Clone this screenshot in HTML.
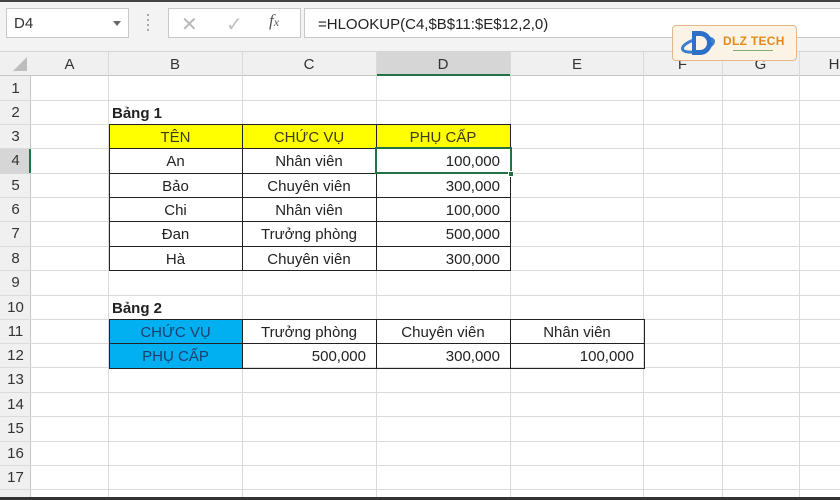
<!DOCTYPE html>
<html><head><meta charset="utf-8"><style>
*{margin:0;padding:0;box-sizing:border-box}
body{width:840px;height:500px;overflow:hidden;background:#fff;font-family:"Liberation Sans",Arial,sans-serif;position:relative}
.a{position:absolute}
.tb{left:0;top:0;width:840px;height:52px;background:#f3f3f3;border-bottom:1px solid #d4d4d4}
.box{background:#fff;border:1px solid #c8c8c8}
.hl{position:absolute;left:0;width:840px;height:1px;background:#dadada}
.vl{position:absolute;top:52px;width:1px;height:446px;background:#dadada}
.ch{position:absolute;top:52px;height:24px;line-height:26px;text-align:center;font-size:15px;color:#333}
.rh{position:absolute;left:0;width:31px;text-align:center;font-size:15px;color:#333;height:24px;line-height:26px}
.c{position:absolute;height:24px;line-height:27px;font-size:15px;color:#222;white-space:nowrap}
.ctr{text-align:center}.rt{text-align:right;padding-right:10px}
</style></head><body>
<div class="a tb"></div>
<div class="a box" style="left:6px;top:8px;width:123px;height:30px"></div>
<div class="a" style="left:14px;top:15px;font-size:15px;color:#333">D4</div>
<div class="a" style="left:113px;top:21px;width:0;height:0;border-left:4px solid transparent;border-right:4px solid transparent;border-top:5px solid #666"></div>
<div class="a" style="left:147px;top:14px;width:2px;height:2px;background:#aaa;box-shadow:0 5px 0 #aaa,0 10px 0 #aaa,0 15px 0 #aaa"></div>
<div class="a box" style="left:168px;top:8px;width:133px;height:30px"></div>
<div class="a" style="left:181px;top:12px;font-size:20px;color:#b8b8b8">✕</div>
<div class="a" style="left:226px;top:12px;font-size:20px;color:#c0c0c0">✓</div>
<div class="a" style="left:269px;top:11px;font-size:17px;font-style:italic;font-family:'Liberation Serif',serif;color:#555">f<span style="font-size:12px">x</span></div>
<div class="a box" style="left:304px;top:8px;width:540px;height:30px"></div>
<div class="a" style="left:318px;top:16px;font-size:15px;color:#222">=HLOOKUP(C4,$B$11:$E$12,2,0)</div>

<div class="a" style="left:0;top:52px;width:840px;height:24px;background:#f0f0f0;border-bottom:1px solid #c6c6c6"></div>
<div class="a" style="left:0;top:76px;width:31px;height:422px;background:#f0f0f0;border-right:1px solid #c6c6c6"></div>
<div class="a" style="left:13px;top:57px;width:0;height:0;border-left:14px solid transparent;border-bottom:14px solid #bdbdbd"></div>
<div class="a" style="left:376px;top:52px;width:134px;height:24px;background:#d6d6d6;border-bottom:2px solid #217346"></div>
<div class="a" style="left:0;top:148px;width:31px;height:25px;background:#d6d6d6;border-right:2px solid #217346"></div>

<div class="vl" style="left:108px"></div><div class="vl" style="left:242px"></div><div class="vl" style="left:376px"></div><div class="vl" style="left:510px"></div><div class="vl" style="left:643px"></div><div class="vl" style="left:722px"></div><div class="vl" style="left:799px"></div>
<div class="hl" style="top:100px"></div><div class="hl" style="top:124px"></div><div class="hl" style="top:148px"></div><div class="hl" style="top:173px"></div><div class="hl" style="top:197px"></div><div class="hl" style="top:221px"></div><div class="hl" style="top:246px"></div><div class="hl" style="top:270px"></div><div class="hl" style="top:295px"></div><div class="hl" style="top:319px"></div><div class="hl" style="top:343px"></div><div class="hl" style="top:367px"></div><div class="hl" style="top:392px"></div><div class="hl" style="top:416px"></div><div class="hl" style="top:441px"></div><div class="hl" style="top:465px"></div><div class="hl" style="top:489px"></div>

<div class="ch" style="left:31px;width:77px">A</div><div class="ch" style="left:108px;width:134px">B</div><div class="ch" style="left:242px;width:134px">C</div><div class="ch" style="left:376px;width:134px">D</div><div class="ch" style="left:510px;width:134px">E</div><div class="ch" style="left:643px;width:79px">F</div><div class="ch" style="left:722px;width:77px">G</div><div class="ch" style="left:799px;width:70px">H</div>

<div class="rh" style="top:76px">1</div><div class="rh" style="top:100px">2</div><div class="rh" style="top:124px">3</div><div class="rh" style="top:148px">4</div><div class="rh" style="top:173px">5</div><div class="rh" style="top:197px">6</div><div class="rh" style="top:221px">7</div><div class="rh" style="top:246px">8</div><div class="rh" style="top:270px">9</div><div class="rh" style="top:295px">10</div><div class="rh" style="top:319px">11</div><div class="rh" style="top:343px">12</div><div class="rh" style="top:367px">13</div><div class="rh" style="top:392px">14</div><div class="rh" style="top:416px">15</div><div class="rh" style="top:441px">16</div><div class="rh" style="top:465px">17</div>

<div class="c" style="left:112px;top:100px;font-weight:bold">Bảng 1</div>
<div class="a" style="left:109px;top:124px;width:401px;height:24px;background:#ffff00"></div>
<div class="a" style="left:109px;top:124px;width:402px;height:147px;border:1px solid #222"></div>
<div class="a" style="left:242px;top:124px;width:1px;height:147px;background:#222"></div>
<div class="a" style="left:376px;top:124px;width:1px;height:147px;background:#222"></div>
<div class="a" style="left:109px;top:148px;width:402px;height:1px;background:#222"></div>
<div class="a" style="left:109px;top:173px;width:402px;height:1px;background:#222"></div>
<div class="a" style="left:109px;top:197px;width:402px;height:1px;background:#222"></div>
<div class="a" style="left:109px;top:221px;width:402px;height:1px;background:#222"></div>
<div class="a" style="left:109px;top:246px;width:402px;height:1px;background:#222"></div>
<div class="c ctr" style="left:109px;top:124px;width:133px;color:#3b3b1e">TÊN</div>
<div class="c ctr" style="left:242px;top:124px;width:134px;color:#3b3b1e">CHỨC VỤ</div>
<div class="c ctr" style="left:376px;top:124px;width:134px;color:#3b3b1e">PHỤ CẤP</div>
<div class="c ctr" style="left:109px;top:148px;width:133px">An</div><div class="c ctr" style="left:242px;top:148px;width:134px">Nhân viên</div><div class="c rt" style="left:376px;top:148px;width:134px">100,000</div>
<div class="c ctr" style="left:109px;top:173px;width:133px">Bảo</div><div class="c ctr" style="left:242px;top:173px;width:134px">Chuyên viên</div><div class="c rt" style="left:376px;top:173px;width:134px">300,000</div>
<div class="c ctr" style="left:109px;top:197px;width:133px">Chi</div><div class="c ctr" style="left:242px;top:197px;width:134px">Nhân viên</div><div class="c rt" style="left:376px;top:197px;width:134px">100,000</div>
<div class="c ctr" style="left:109px;top:221px;width:133px">Đan</div><div class="c ctr" style="left:242px;top:221px;width:134px">Trưởng phòng</div><div class="c rt" style="left:376px;top:221px;width:134px">500,000</div>
<div class="c ctr" style="left:109px;top:246px;width:133px">Hà</div><div class="c ctr" style="left:242px;top:246px;width:134px">Chuyên viên</div><div class="c rt" style="left:376px;top:246px;width:134px">300,000</div>
<div class="a" style="left:375px;top:147px;width:137px;height:27px;border:2px solid #217346"></div>
<div class="a" style="left:508px;top:171px;width:6px;height:6px;background:#217346;border:1px solid #fff"></div>

<div class="c" style="left:112px;top:295px;font-weight:bold">Bảng 2</div>
<div class="a" style="left:109px;top:319px;width:133px;height:49px;background:#00b0f0"></div>
<div class="a" style="left:109px;top:319px;width:536px;height:50px;border:1px solid #222"></div>
<div class="a" style="left:242px;top:319px;width:1px;height:50px;background:#222"></div>
<div class="a" style="left:376px;top:319px;width:1px;height:50px;background:#222"></div>
<div class="a" style="left:510px;top:319px;width:1px;height:50px;background:#222"></div>
<div class="a" style="left:109px;top:343px;width:536px;height:1px;background:#222"></div>
<div class="c ctr" style="left:109px;top:319px;width:133px;color:#1f3f6e">CHỨC VỤ</div>
<div class="c ctr" style="left:242px;top:319px;width:134px">Trưởng phòng</div>
<div class="c ctr" style="left:376px;top:319px;width:134px">Chuyên viên</div>
<div class="c ctr" style="left:510px;top:319px;width:134px">Nhân viên</div>
<div class="c ctr" style="left:109px;top:343px;width:133px;color:#1f3f6e">PHỤ CẤP</div>
<div class="c rt" style="left:242px;top:343px;width:134px">500,000</div>
<div class="c rt" style="left:376px;top:343px;width:134px">300,000</div>
<div class="c rt" style="left:510px;top:343px;width:134px">100,000</div>

<div class="a" style="left:672px;top:25px;width:125px;height:36px;background:#fbf3e6;border:1px solid #e2b889;border-radius:4px"></div>
<svg class="a" style="left:680px;top:26px" width="40" height="34" viewBox="0 0 40 34">
<ellipse cx="18" cy="19" rx="16" ry="6" fill="none" stroke="#3a7fd0" stroke-width="3" transform="rotate(-15 18 19)"/>
<path d="M12 5 h8 a12 12 0 0 1 0 24 h-8 z" fill="#2e6fc7"/>
<path d="M16 10 h4 a7 7 0 0 1 0 14 h-4 z" fill="#fbf3e6"/>
</svg>
<div class="a" style="left:723px;top:34px;font-size:12px;font-weight:bold;color:#e38a1e;letter-spacing:0.3px">DLZ TECH</div>
<div class="a" style="left:733px;top:50px;width:40px;height:1px;background:#7fae6e"></div>

<div class="a" style="left:0;top:497px;width:840px;height:3px;background:#333"></div>
<div class="a" style="left:0;top:0;width:840px;height:2px;background:#444"></div>
</body></html>
